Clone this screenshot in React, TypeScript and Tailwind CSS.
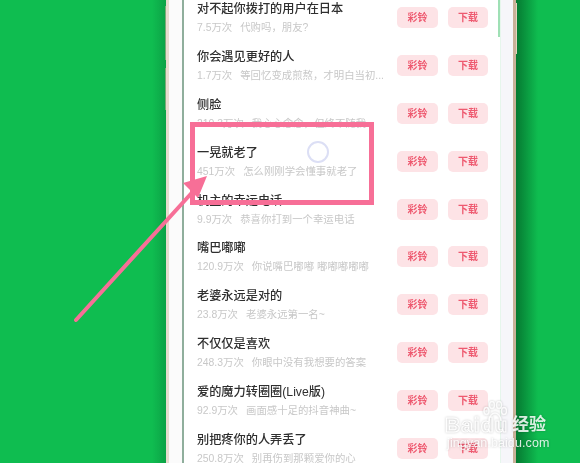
const songs = [
  { title: "对不起你拨打的用户在日本", plays: "7.5万次", desc: "代购吗，朋友?" },
  { title: "你会遇见更好的人", plays: "1.7万次", desc: "等回忆变成煎熬，才明白当初..." },
  { title: "侧脸", plays: "210.3万次", desc: "我心心念念，但终不随我" },
  { title: "一晃就老了", plays: "451万次", desc: "怎么刚刚学会懂事就老了" },
  { title: "机主的幸运电话", plays: "9.9万次", desc: "恭喜你打到一个幸运电话" },
  { title: "嘴巴嘟嘟", plays: "120.9万次", desc: "你说嘴巴嘟嘟 嘟嘟嘟嘟嘟" },
  { title: "老婆永远是对的", plays: "23.8万次", desc: "老婆永远第一名~" },
  { title: "不仅仅是喜欢", plays: "248.3万次", desc: "你眼中没有我想要的答案" },
  { title: "爱的魔力转圈圈(Live版)", plays: "92.9万次", desc: "画面感十足的抖音神曲~" },
  { title: "别把疼你的人弄丢了", plays: "250.8万次", desc: "别再伤到那颗爱你的心" },
];

function SongRow({ title, plays, desc }: { title: string; plays: string; desc: string }) {
  return (
    <div className="flex h-[47.8px] shrink-0 items-center">
      <div className="w-[200px] pt-[2px]">
        <p className="whitespace-nowrap text-[12.2px] leading-[17px] font-medium text-[#2f2f2f]">{title}</p>
        <p className="mt-[2px] flex gap-[8px] whitespace-nowrap text-[10.4px] leading-[16px] text-[#c8c8c8]">
          <span>{plays}</span>
          <span>{desc}</span>
        </p>
      </div>
      <button className="h-[21px] w-[41px] rounded-[5px] bg-[#fde3e6] text-[10px] font-semibold text-[#ee5a70]">彩铃</button>
      <button className="ml-[10px] h-[21px] w-[40px] rounded-[5px] bg-[#fde3e6] text-[10px] font-semibold text-[#ee5a70]">下载</button>
    </div>
  );
}

export default function App() {
  return (
    <div className="relative h-[463px] w-[580px] overflow-hidden bg-[#0fbd50] blur-[0.4px] [font-family:'Liberation_Sans','Noto_Sans_CJK_SC',sans-serif]">
      <div className="flex h-full pl-[152px]">
        {/* shadow on the left of the phone */}
        <div className="h-full w-[14px] bg-gradient-to-r from-[#0fbd50] to-[#0ca246]" />
        {/* phone body */}
        <div className="flex h-full w-[350px] border-x-[3px] border-l-[#e8dccf] border-r-[#c9b199] bg-[#f7f7f9]">
          <div className="h-full w-[13px] bg-[#fbfbfb]" />
          <div className="h-full w-[2px] bg-[#8fae9c]" />
          <div className="relative h-full flex-1 overflow-hidden bg-white pl-[13px]">
            <div className="-mt-[6px] flex flex-col">
              {songs.map((song) => (
                <SongRow key={song.title} {...song} />
              ))}
            </div>
            <div className="absolute right-0 top-0 h-[37px] w-[2px] bg-[#9fe0b5]" />
          </div>
          <div className="h-full w-[13px] border-l border-[#e6f6ec] bg-[#f6f6fa]" />
        </div>
        {/* shadow on the right of the phone */}
        <div className="h-full w-[22px] bg-gradient-to-r from-[#067a32] to-[#0fbd50]" />
      </div>

      {/* phone side keys */}
      <div className="absolute left-[165px] top-[6px] h-[54px] w-[1px] bg-[#c9b199]/60" />
      <div className="absolute left-[165px] top-[68px] h-[42px] w-[1px] bg-[#c9b199]/60" />
      <div className="absolute left-[516px] top-[3px] h-[51px] w-[1px] bg-[#e3d6c0]" />

      {/* highlight frame */}
      <div className="absolute left-[190px] top-[122px] h-[83px] w-[184px] border-[5px] border-[#f76f97]" />

      {/* loading ring */}
      <div className="absolute left-[307px] top-[141px] h-[22px] w-[22px] rounded-full border-2 border-[#dcdff5]" />

      {/* arrow */}
      <svg className="absolute left-0 top-0" width="580" height="463" viewBox="0 0 580 463" fill="none">
        <path d="M76 320 L198 186" stroke="#f76f97" strokeWidth="4" strokeLinecap="round" />
        <path d="M207 176 L183 183 L198 198 Z" fill="#f76f97" />
      </svg>

      {/* watermark */}
      <div className="absolute left-[445px] top-[401px] text-white/85 drop-shadow-[0_0_1px_rgba(0,0,0,0.25)]">
        <svg className="absolute left-[38px] top-0" width="24" height="24" viewBox="0 0 24 24" fill="none" stroke="currentColor" strokeWidth="1.5">
          <ellipse cx="3.5" cy="10" rx="2.5" ry="3.5" />
          <ellipse cx="9" cy="4" rx="2.5" ry="3.5" />
          <ellipse cx="16" cy="4" rx="2.5" ry="3.5" />
          <ellipse cx="21" cy="10" rx="2.5" ry="3.5" />
          <path d="M6 20c0-5 3.500-8 6-8s6 3 6 8" />
        </svg>
        <div className="flex items-center pt-[14px] whitespace-nowrap">
          <span className="w-[62px] text-[21px] leading-[20px] font-bold tracking-[1px] [-webkit-text-stroke:1px_white] text-transparent">Baidu</span>
          <span className="ml-[5px] text-[17px] leading-[20px] font-bold">经验</span>
        </div>
        <p className="mt-[1px] pl-[2px] text-[12.5px] leading-[14px] tracking-[0.1px] whitespace-nowrap">jingyan.baidu.com</p>
      </div>
    </div>
  );
}
